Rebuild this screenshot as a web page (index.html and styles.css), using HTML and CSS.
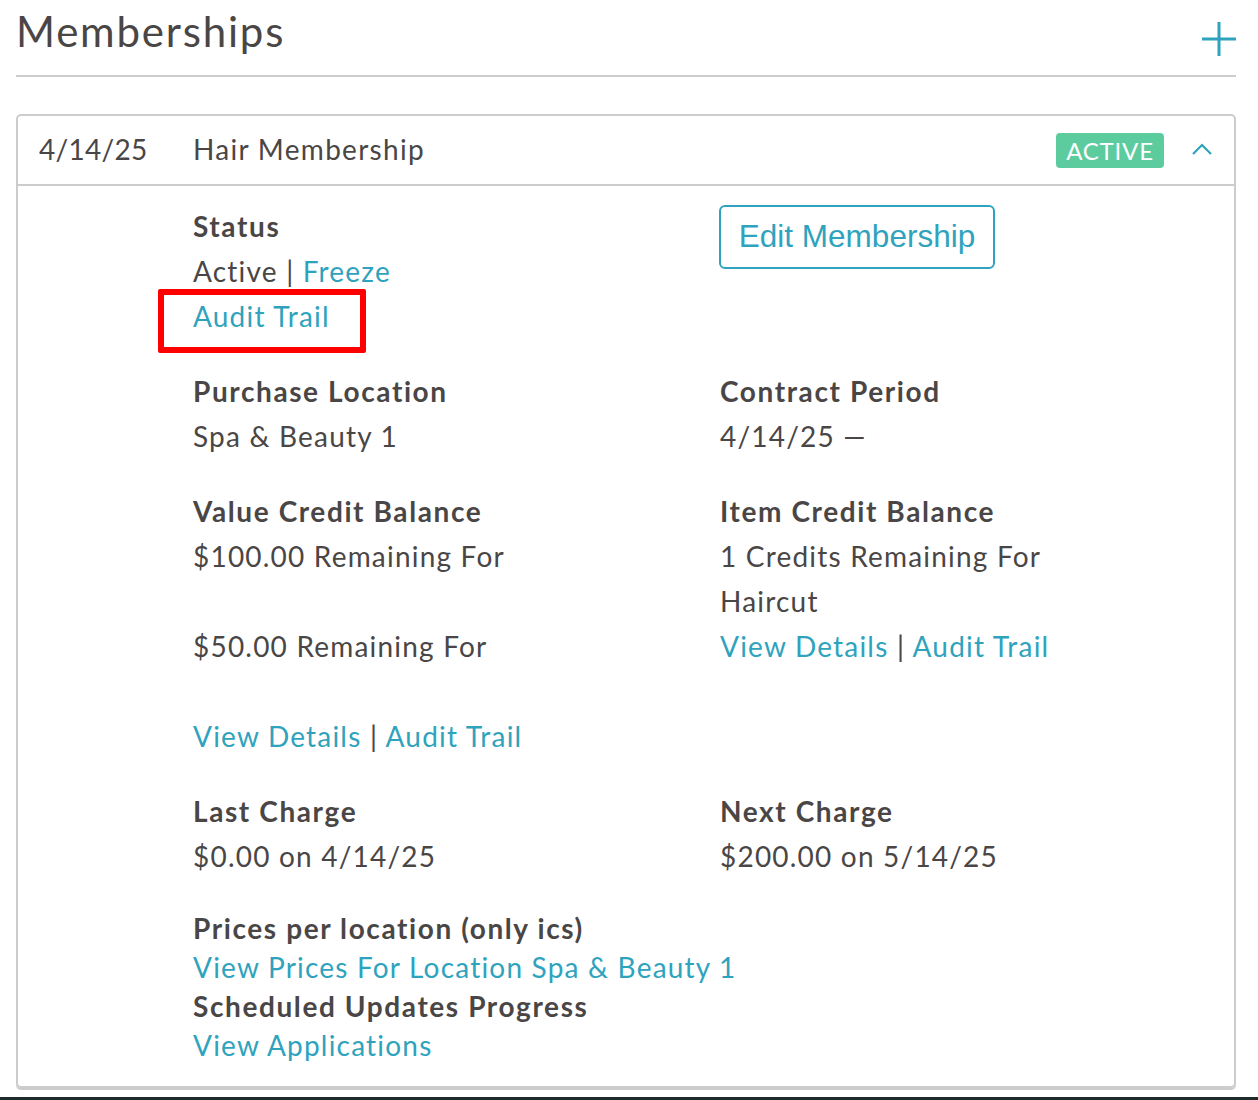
FILE: index.html
```html
<!DOCTYPE html>
<html lang="en">
<head>
<meta charset="utf-8">
<title>Memberships</title>
<link rel="stylesheet" href="styles.css">
</head>
<body>
<div class="page">
  <header class="section-head">
    <h1 class="section-title">Memberships</h1>
    <button class="add-btn" aria-label="Add membership">
      <svg width="36" height="36" viewBox="0 0 36 36"><path d="M18 1V35M1 18H35" stroke="#2fa3bd" stroke-width="3" fill="none"/></svg>
    </button>
  </header>

  <div class="card">
    <div class="card-head">
      <span class="card-date">4/14/25</span>
      <span class="card-name">Hair Membership</span>
      <span class="badge">ACTIVE</span>
      <span class="chevron">
        <svg width="22" height="14" viewBox="0 0 22 14"><path d="M2 12L11 3L20 12" stroke="#2fa3bd" stroke-width="2.2" fill="none"/></svg>
      </span>
    </div>

    <div class="card-body">
      <div class="field">
        <div class="label">Status</div>
        <div class="line">Active <span class="sep">|</span> <a class="link">Freeze</a></div>
        <div class="line"><span class="marked"><a class="link">Audit Trail</a><span class="mark-box"></span></span></div>
      </div>
      <div class="field">
        <button class="edit-btn">Edit Membership</button>
      </div>

      <div class="field">
        <div class="label">Purchase Location</div>
        <div class="line">Spa &amp; Beauty 1</div>
      </div>
      <div class="field">
        <div class="label">Contract Period</div>
        <div class="line">4/14/25 —</div>
      </div>

      <div class="field">
        <div class="label">Value Credit Balance</div>
        <div class="line">$100.00 Remaining For</div>
        <div class="line"></div>
        <div class="line">$50.00 Remaining For</div>
        <div class="line"></div>
        <div class="line"><a class="link">View Details</a> <span class="sep">|</span> <a class="link">Audit Trail</a></div>
      </div>
      <div class="field">
        <div class="label">Item Credit Balance</div>
        <div class="line">1 Credits Remaining For</div>
        <div class="line">Haircut</div>
        <div class="line"><a class="link">View Details</a> <span class="sep">|</span> <a class="link">Audit Trail</a></div>
      </div>

      <div class="field">
        <div class="label">Last Charge</div>
        <div class="line">$0.00 on 4/14/25</div>
      </div>
      <div class="field">
        <div class="label">Next Charge</div>
        <div class="line">$200.00 on 5/14/25</div>
      </div>

      <div class="field field-wide compact">
        <div class="label">Prices per location (only ics)</div>
        <div class="line"><a class="link">View Prices For Location Spa &amp; Beauty 1</a></div>
        <div class="label">Scheduled Updates Progress</div>
        <div class="line"><a class="link">View Applications</a></div>
      </div>
    </div>
  </div>
</div>
<div class="footer-bar"></div>
</body>
</html>
```

FILE: styles.css
```css
* { box-sizing: border-box; }

html, body {
  margin: 0;
  padding: 0;
  background: #ffffff;
}

body {
  font-family: Lato, "Open Sans", "Liberation Sans", sans-serif;
  color: #4a4646;
}

.page {
  padding: 0 22px 0 16px;
  height: 1097px;
}

.section-head {
  display: flex;
  align-items: flex-start;
  justify-content: space-between;
  height: 77px;
  border-bottom: 2px solid #cccccc;
  padding: 0;
}

.section-title {
  margin: 10px 0 0;
  font-weight: 400;
  font-size: 42px;
  letter-spacing: 1.8px;
  color: #4a4646;
  line-height: 1;
}

.add-btn {
  border: 0;
  background: none;
  padding: 0;
  margin: 21px -1px 0 0;
  width: 36px;
  height: 36px;
  display: flex;
}

.card {
  margin-top: 37px;
  border: 2px solid #cccccc;
  border-radius: 5px;
  box-shadow: 0 2px 0 #cccccc;
}

.card-head {
  display: flex;
  align-items: center;
  height: 70px;
  border-bottom: 2px solid #cccccc;
  padding: 0 21px 2px 21px;
  font-size: 28px;
  letter-spacing: 1.3px;
}

.card-date {
  width: 154px;
  letter-spacing: 0.3px;
}

.card-name {
  flex: 1;
}

.badge {
  background: #5ccc9f;
  color: #ffffff;
  font-size: 24px;
  letter-spacing: 0.8px;
  border-radius: 4px;
  width: 108px;
  height: 35px;
  display: flex;
  align-items: center;
  justify-content: center;
  margin-top: 3px;
}

.chevron {
  display: flex;
  margin-left: 27px;
  margin-top: -1px;
}

.card-body {
  display: grid;
  grid-template-columns: 527px 1fr;
  row-gap: 30px;
  padding: 18px 0 21px 175px;
  font-size: 28px;
  letter-spacing: 1.2px;
}

.field-wide {
  grid-column: 1 / -1;
}

.label {
  font-weight: 700;
  letter-spacing: 1.6px;
  line-height: 45px;
  height: 45px;
}

.line {
  line-height: 45px;
  min-height: 45px;
}

.compact .label,
.compact .line {
  line-height: 39px;
  height: 39px;
  min-height: 39px;
}

.link {
  color: #2fa3bd;
  text-decoration: none;
}

.sep {
  color: #4a4646;
}

.marked {
  position: relative;
  display: inline-block;
}

.mark-box {
  position: absolute;
  left: -35px;
  top: -5px;
  width: 208px;
  height: 64px;
  border: 6px solid #ff0000;
  border-radius: 2px;
}

.edit-btn {
  margin: 1px 0 0 -1px;
  width: 276px;
  height: 64px;
  border: 2px solid #2fa3bd;
  border-radius: 6px;
  background: #ffffff;
  color: #2fa3bd;
  font-family: "Liberation Sans", Arial, sans-serif;
  font-size: 31.5px;
  letter-spacing: 0;
  padding: 0 0 2px;
}

.footer-bar {
  height: 3px;
  background: #1e2a2a;
}
```
